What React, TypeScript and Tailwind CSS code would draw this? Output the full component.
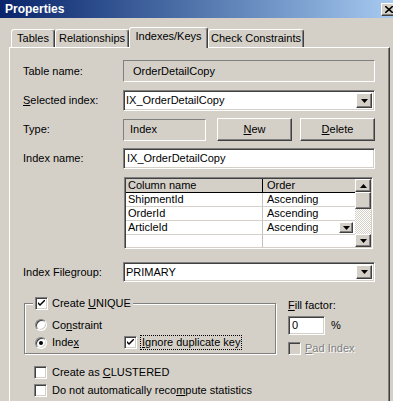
const raised =
  "border border-t-white border-l-white border-r-[#404040] border-b-[#404040] shadow-[inset_-1px_-1px_0_#808080] bg-[#d4d0c8]";
const sunken =
  "border border-t-[#808080] border-l-[#808080] border-r-white border-b-white shadow-[inset_1px_1px_0_#404040,inset_-1px_-1px_0_#d4d0c8]";
const flat = "border border-t-[#808080] border-l-[#808080] border-r-white border-b-white";

function Arrow({ up = false }: { up?: boolean }) {
  return (
    <svg width="7" height="4" viewBox="0 0 7 4" className={up ? "rotate-180" : ""}>
      <path d="M0 0h7L3.5 4z" fill="#000" />
    </svg>
  );
}

function DropButton() {
  return (
    <div className={`${raised} w-[16px] h-full flex items-center justify-center`}>
      <Arrow />
    </div>
  );
}

function Check({ checked = false, disabled = false }: { checked?: boolean; disabled?: boolean }) {
  return (
    <div
      className={`${sunken} w-[13px] h-[13px] shrink-0 flex items-center justify-center ${
        disabled ? "bg-[#d4d0c8]" : "bg-white"
      }`}
    >
      {checked && (
        <svg width="7" height="7" viewBox="0 0 7 7">
          <path d="M0 2v2l2 2 5-5V-1L2 4z" fill="#000" />
        </svg>
      )}
    </div>
  );
}

function Radio({ checked = false }: { checked?: boolean }) {
  return (
    <div className="w-[12px] h-[12px] shrink-0 rounded-full border border-t-[#808080] border-l-[#808080] border-r-white border-b-white shadow-[inset_1px_1px_0_#404040,inset_-1px_-1px_0_#d4d0c8] bg-white flex items-center justify-center">
      {checked && <div className="w-[4px] h-[4px] rounded-full bg-black" />}
    </div>
  );
}

function Label({ children }: { children: React.ReactNode }) {
  return <div className="w-[100px] shrink-0">{children}</div>;
}

function Tab({ label, w, active = false }: { label: string; w: string; active?: boolean }) {
  return (
    <div
      className={`${w} ${
        active ? "h-[21px] mb-[-1px] relative z-10 pb-[3px]" : "h-[18px]"
      } bg-[#d4d0c8] border-t border-l border-r border-t-white border-l-white border-r-[#404040] shadow-[inset_-1px_0_0_#808080] rounded-t-[3px] flex items-center justify-center`}
    >
      {label}
    </div>
  );
}

const rows = ["ShipmentId", "OrderId", "ArticleId", ""];

export default function App() {
  return (
    <div className="w-[393px] h-[401px] overflow-hidden bg-[#d4d0c8] text-black text-[11px] leading-[13px] font-['Liberation_Sans',Arial,sans-serif] flex flex-col">
      {/* Title bar */}
      <div className="h-[18px] shrink-0 bg-gradient-to-r from-[#0a246a] to-[#a6caf0] flex items-center justify-between pl-[5px]">
        <span className="text-white font-bold text-[12px]">Properties</span>
        <div className={`${raised} w-[16px] h-[13px] mr-[-4px] flex items-center justify-center`}>
          <svg width="8" height="7" viewBox="0 0 8 7">
            <path d="M0 0l8 7M8 0L0 7" stroke="#000" strokeWidth="1.6" />
          </svg>
        </div>
      </div>

      <div className="flex-1 flex flex-col pl-[9px]">
        {/* Tabs */}
        <div className="mt-[9px] h-[20px] flex items-end pl-[2px]">
          <Tab label="Tables" w="w-[44px]" />
          <Tab label="Relationships" w="w-[74px]" />
          <Tab label="Indexes/Keys" w="w-[79px]" active />
          <Tab label="Check Constraints" w="w-[96px]" />
        </div>

        {/* Panel */}
        <div className="w-[381px] flex-1 border-t border-l border-r border-t-white border-l-white border-r-[#404040] shadow-[inset_-1px_0_0_#808080] pl-[13px] flex flex-col">
          <div className="mt-[12px] h-[22px] flex items-center">
            <Label>Table name:</Label>
            <div className={`${flat} w-[252px] h-full flex items-center pl-[9px]`}>OrderDetailCopy</div>
          </div>

          <div className="mt-[8px] h-[21px] flex items-center">
            <Label>
              <span className="underline">S</span>elected index:
            </Label>
            <div className={`${sunken} w-[252px] h-full bg-white flex items-center justify-between pl-[2px] p-[2px]`}>
              <span>IX_OrderDetailCopy</span>
              <DropButton />
            </div>
          </div>

          <div className="mt-[7px] h-[23px] flex items-center">
            <Label>Type:</Label>
            <div className={`${flat} w-[83px] h-[22px] flex items-center pl-[6px]`}>Index</div>
            <div className={`${raised} ml-[11px] w-[75px] h-full flex items-center justify-center`}>
              <span>
                <span className="underline">N</span>ew
              </span>
            </div>
            <div className={`${raised} ml-[8px] w-[75px] h-full flex items-center justify-center`}>
              <span>
                <span className="underline">D</span>elete
              </span>
            </div>
          </div>

          <div className="mt-[7px] h-[21px] flex items-center">
            <Label>Index name:</Label>
            <div className={`${sunken} w-[252px] h-full bg-white flex items-center pl-[3px]`}>IX_OrderDetailCopy</div>
          </div>

          {/* Column grid */}
          <div className={`${sunken} mt-[8px] ml-[101px] w-[249px] h-[72px] p-[1px] flex`}>
            <div className="w-[229px] flex flex-col">
              <div className="h-[14px] flex bg-[#d4d0c8] border-b border-black">
                <div className="w-[137px] pl-[2px] border-r border-black">Column name</div>
                <div className="flex-1 pl-[4px]">Order</div>
              </div>
              {rows.map((r, i) => (
                <div key={i} className="h-[14px] flex bg-white border-b border-[#d4d0c8] last:border-b-0">
                  <div className="w-[137px] pl-[2px] border-r border-[#c0c0c0]">{r}</div>
                  <div className="flex-1 pl-[4px] pr-[2px] flex items-center justify-between">
                    <span>{r ? "Ascending" : ""}</span>
                    {r === "ArticleId" && (
                      <div className={`${raised} w-[14px] h-[11px] flex items-center justify-center`}>
                        <Arrow />
                      </div>
                    )}
                  </div>
                </div>
              ))}
            </div>
            <div className="w-[16px] flex flex-col">
              <div className={`${raised} h-[13px] flex items-center justify-center`}>
                <Arrow up />
              </div>
              <div className={`${raised} h-[17px]`} />
              <div className="flex-1 bg-[repeating-conic-gradient(#ffffff_0_25%,#d4d0c8_0_50%)] bg-[length:2px_2px]" />
              <div className={`${raised} h-[13px] flex items-center justify-center`}>
                <Arrow />
              </div>
            </div>
          </div>

          <div className="mt-[13px] h-[20px] flex items-center">
            <Label>Index Filegroup:</Label>
            <div className={`${sunken} w-[252px] h-full bg-white flex items-center justify-between pl-[2px] p-[2px]`}>
              <span>PRIMARY</span>
              <DropButton />
            </div>
          </div>

          {/* Unique group + fill factor */}
          <div className="mt-[15px] flex">
            <fieldset className="ml-[1px] w-[252px] h-[57px] border border-[#808080] shadow-[inset_1px_1px_0_#fff,1px_1px_0_#fff] pl-[10px]">
              <legend className="ml-[-2px] px-[2px] bg-[#d4d0c8] flex items-center gap-[4px]">
                <Check checked />
                <span>
                  Create <span className="underline">U</span>NIQUE
                </span>
              </legend>
              <div className="mt-[9px] h-[12px] flex items-center gap-[5px]">
                <Radio />
                <span>
                  Co<span className="underline">n</span>straint
                </span>
              </div>
              <div className="mt-[5px] h-[13px] flex items-center">
                <div className="w-[89px] flex items-center gap-[5px]">
                  <Radio checked />
                  <span>
                    Inde<span className="underline">x</span>
                  </span>
                </div>
                <Check checked />
                <span className="ml-[3px] border border-dotted border-black px-[1px]">
                  <span className="underline">I</span>gnore duplicate key
                </span>
              </div>
            </fieldset>

            <div className="ml-[12px] flex flex-col">
              <div className="mt-[2px] h-[13px]">
                <span className="underline">F</span>ill factor:
              </div>
              <div className="mt-[4px] flex items-center">
                <div className={`${sunken} w-[37px] h-[19px] bg-white flex items-center pl-[3px]`}>0</div>
                <span className="ml-[6px]">%</span>
              </div>
              <div className="mt-[7px] flex items-center gap-[4px]">
                <Check disabled />
                <span className="text-[#808080] [text-shadow:1px_1px_0_#fff]">
                  <span className="underline">P</span>ad Index
                </span>
              </div>
            </div>
          </div>

          <div className="mt-[11px] ml-[11px] h-[13px] flex items-center gap-[5px]">
            <Check />
            <span>
              Create as <span className="underline">C</span>LUSTERED
            </span>
          </div>
          <div className="mt-[5px] ml-[11px] h-[13px] flex items-center gap-[5px]">
            <Check />
            <span>
              Do not automatically reco<span className="underline">m</span>pute statistics
            </span>
          </div>
        </div>
      </div>
    </div>
  );
}
